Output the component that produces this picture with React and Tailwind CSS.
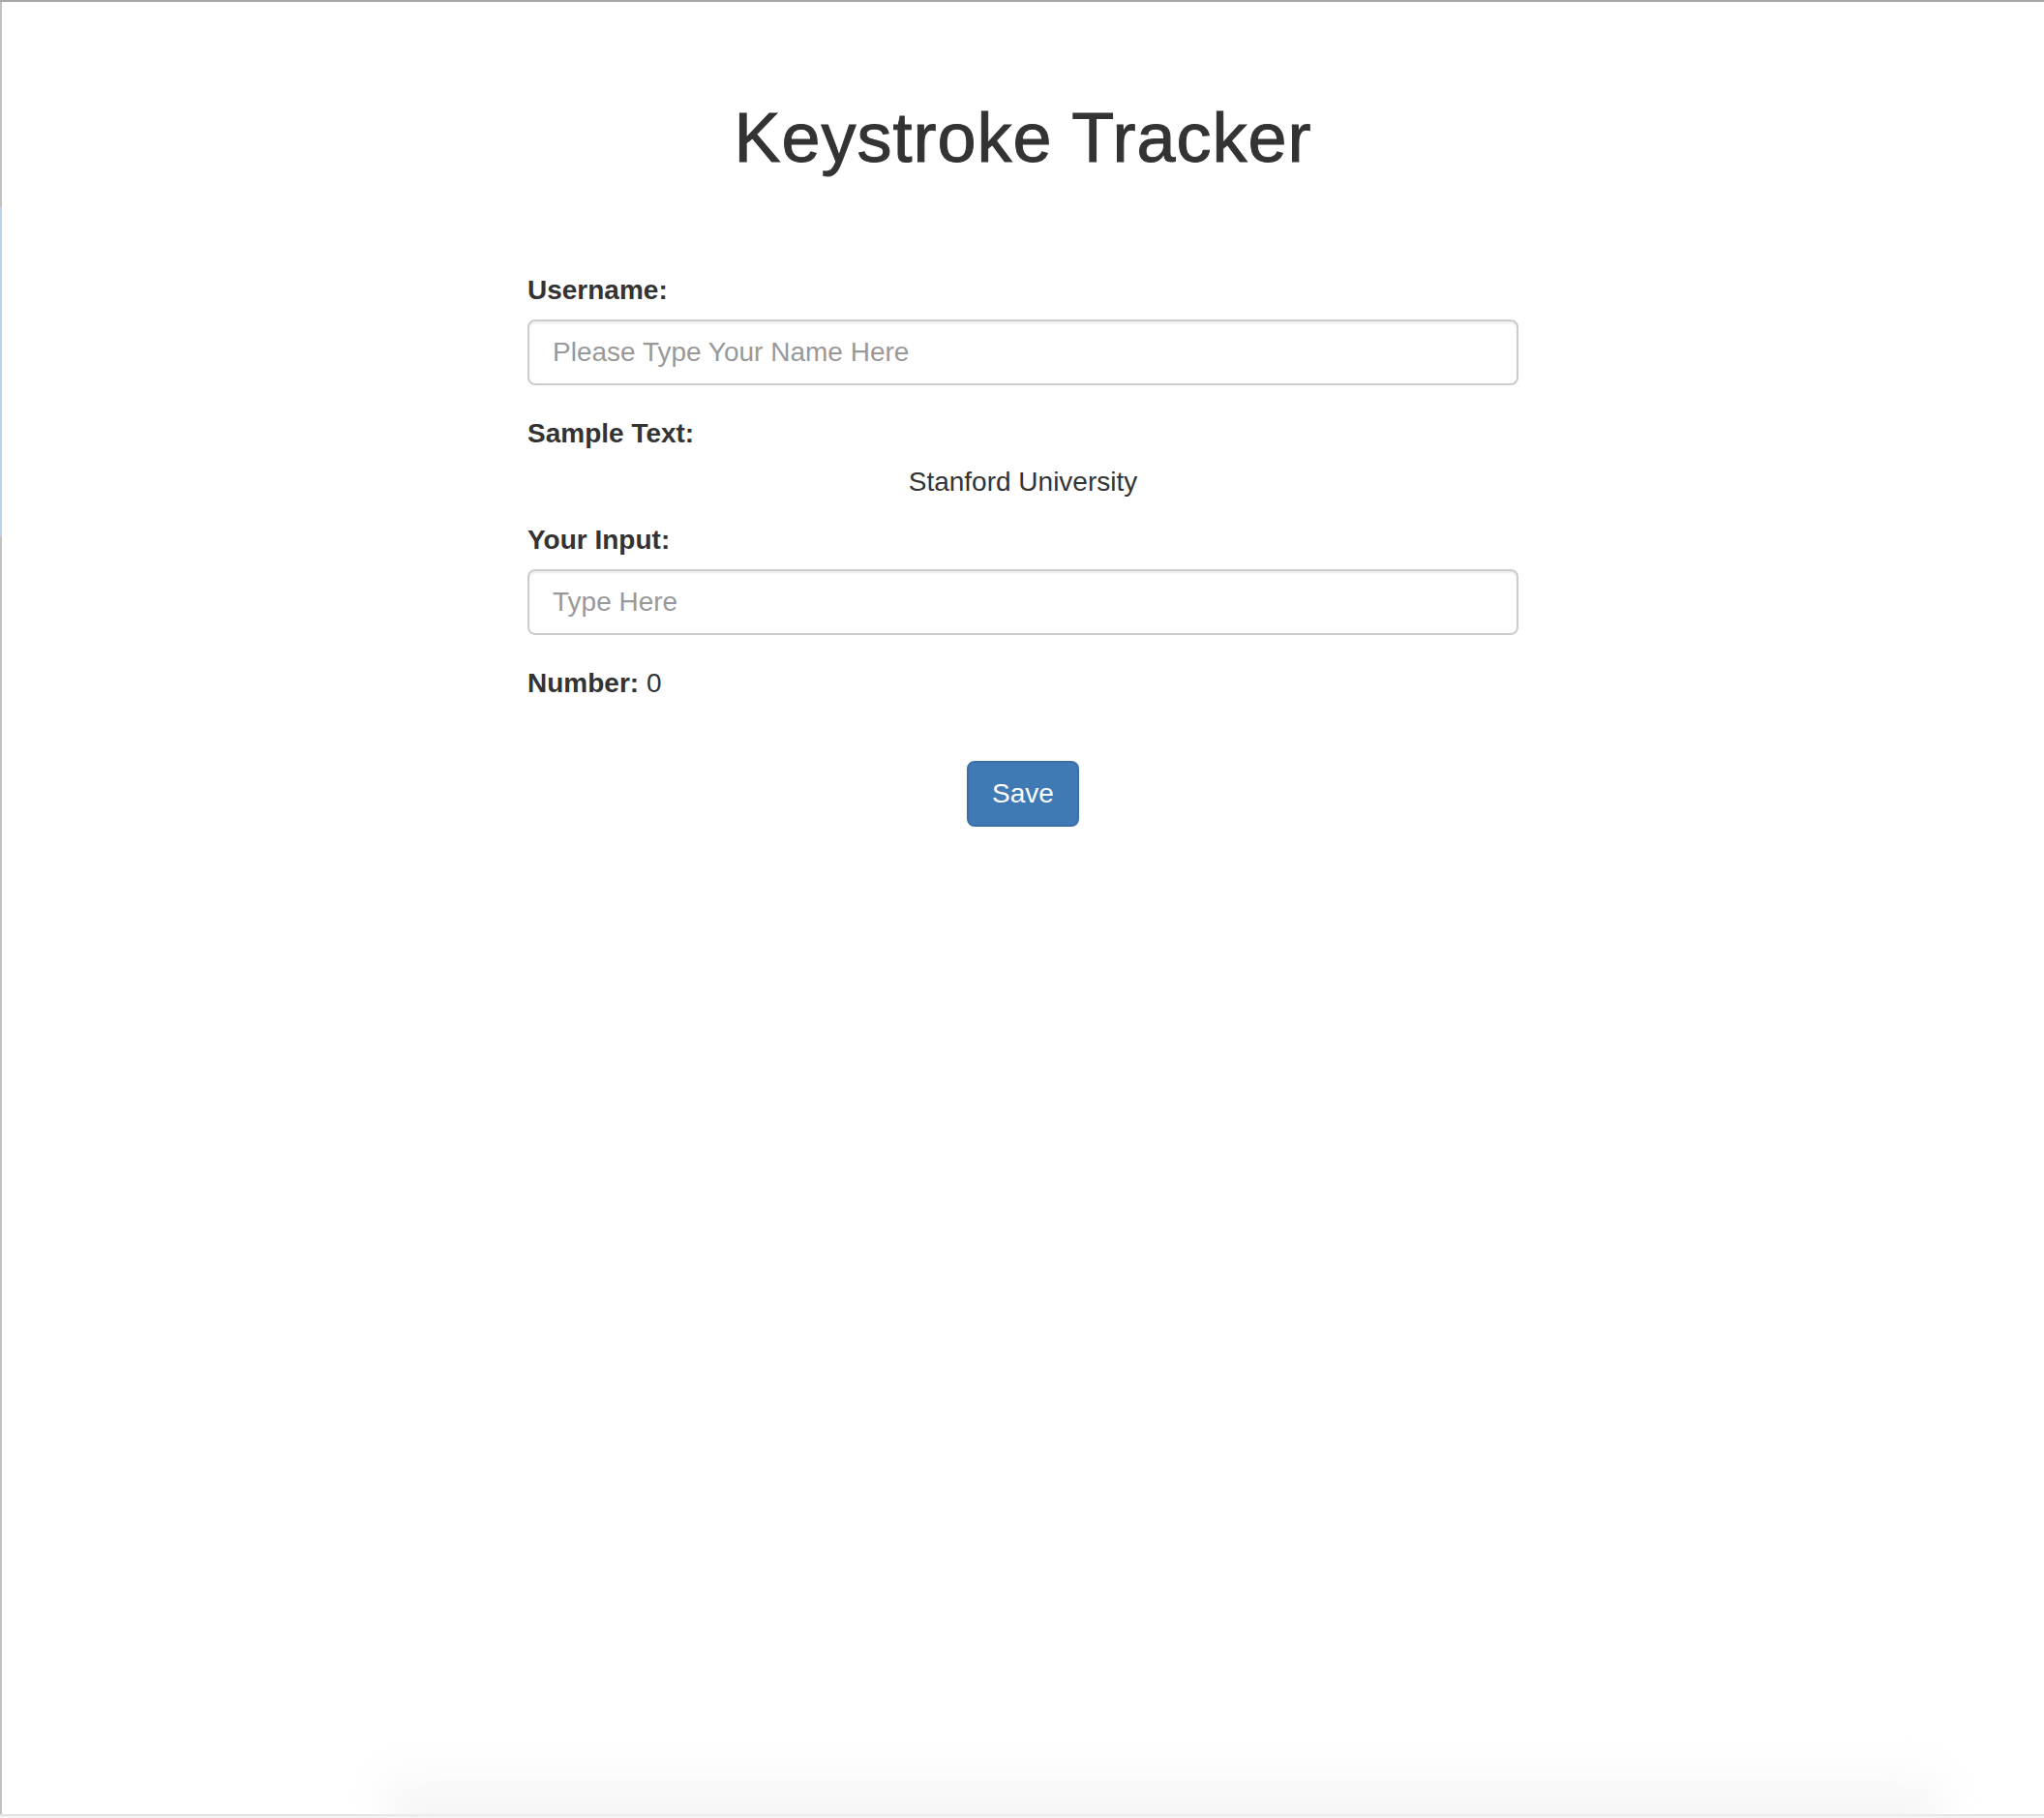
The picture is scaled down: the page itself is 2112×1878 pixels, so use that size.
import { useState } from "react";

const font = { fontFamily: '"Liberation Sans", Arial, Helvetica, sans-serif' };

const Label = ({ children }) => (
  <label className="block text-[28px] leading-[40px] font-bold text-[#333] mb-[10px]">
    {children}
  </label>
);

const TextInput = ({ placeholder, value, onChange }) => (
  <input
    type="text"
    value={value}
    onChange={onChange}
    placeholder={placeholder}
    className="block w-full h-[68px] px-[24px] text-[28px] text-[#555] bg-white border-2 border-[#ccc] rounded-[8px] shadow-[inset_0_2px_2px_rgba(0,0,0,0.075)] placeholder:text-[#999] outline-none"
  />
);

export default function App() {
  const [username, setUsername] = useState("");
  const [input, setInput] = useState("");
  const [count, setCount] = useState(0);

  // cuenta cada tecla pulsada en el campo de entrada
  const handleKey = (e) => {
    setInput(e.target.value);
    setCount((c) => c + 1);
  };

  return (
    <div style={font} className="relative h-screen flex flex-col bg-white overflow-hidden">
      <div className="h-[2px] bg-[#a8a8a8]" />
      <div className="flex flex-1">
        {/* borde izquierdo de la ventana */}
        <div className="w-[2px] flex flex-col bg-[#c2c2c2]">
          <div className="h-[212px]" />
          <div className="h-[340px] bg-[#bcd3ee]" />
        </div>
        <main className="relative flex-1">
          <div className="w-[1024px] mx-auto pt-[101px] text-[#333]">
            <h1 className="text-center text-[72px] leading-[1.1] font-medium tracking-[1px] text-[#333] [-webkit-text-stroke:1px_#333]">
              Keystroke Tracker
            </h1>

            <form
              className="mt-[98px]"
              onSubmit={(e) => e.preventDefault()}
            >
              <div className="mb-[30px]">
                <Label>Username:</Label>
                <TextInput
                  placeholder="Please Type Your Name Here"
                  value={username}
                  onChange={(e) => setUsername(e.target.value)}
                />
              </div>

              <div>
                <Label>Sample Text:</Label>
                <p className="text-center text-[28px] leading-[40px] mb-[20px]">
                  Stanford University
                </p>
              </div>

              <div className="mb-[30px]">
                <Label>Your Input:</Label>
                <TextInput placeholder="Type Here" value={input} onChange={handleKey} />
              </div>

              <div className="text-[28px] leading-[40px]">
                <span className="font-bold">Number:</span> {count}
              </div>

              <div className="flex justify-center mt-[60px]">
                <button
                  type="submit"
                  className="px-[24px] py-[12px] text-[28px] leading-[40px] text-white bg-[#407ab4] border-2 border-[#3a70a6] rounded-[8px]"
                >
                  Save
                </button>
              </div>
            </form>
          </div>

          {/* sombra inferior de la ventana */}
          <div className="absolute left-[390px] right-[100px] bottom-[-20px] h-[80px] rounded-[60px] bg-gradient-to-b from-transparent to-[#f2f2f2] blur-[18px]" />
        </main>
      </div>
      <div className="h-[2px] bg-[#e2e2e2]" />
      <div className="h-[2px] bg-[#f5f5f5]" />
    </div>
  );
}
